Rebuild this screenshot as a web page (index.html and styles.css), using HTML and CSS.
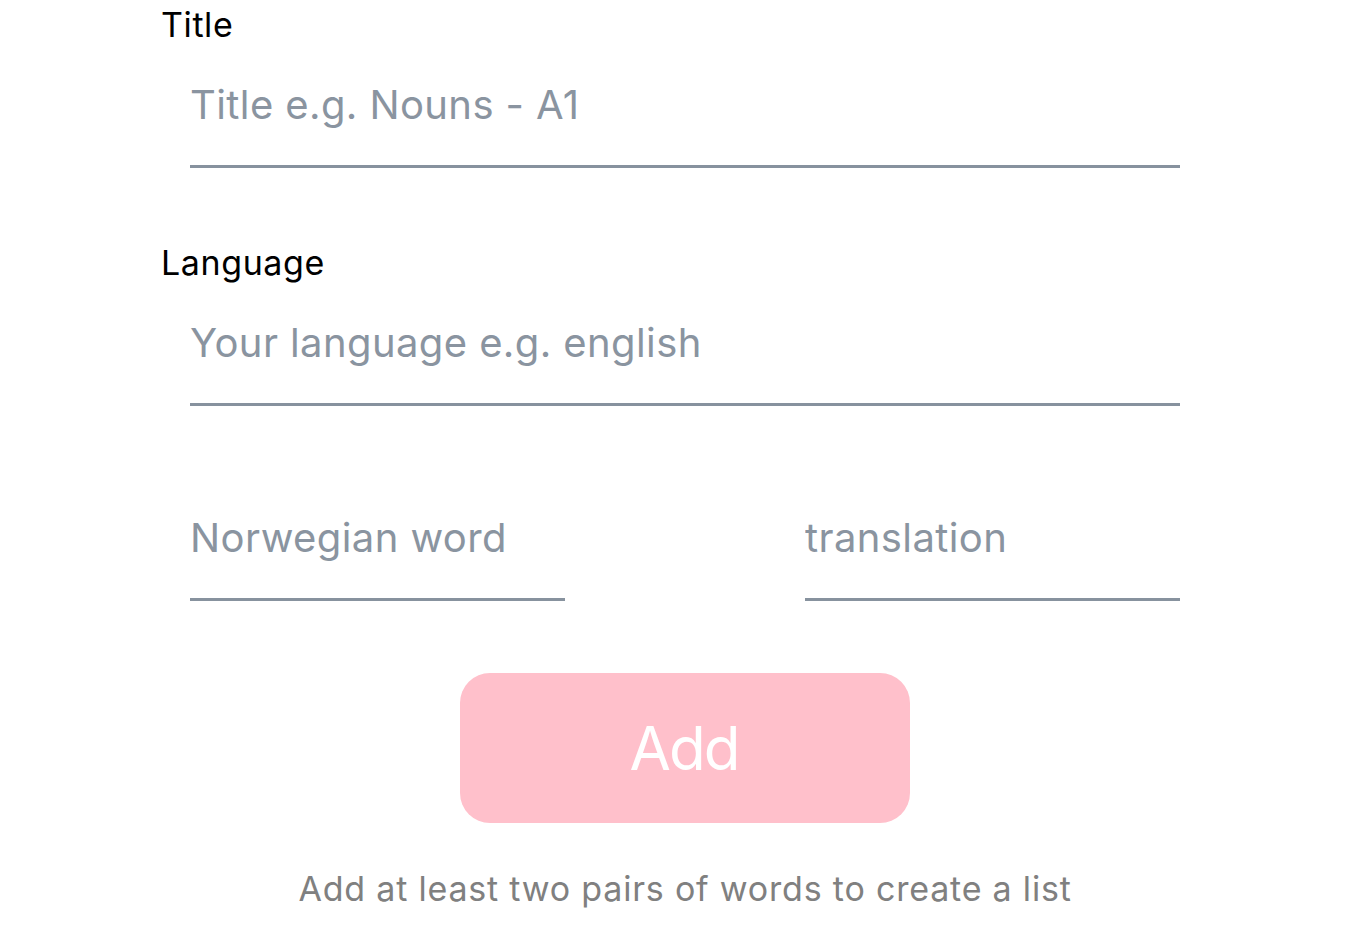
FILE: index.html
```html
<!DOCTYPE html>
<html lang="en">
<head>
<meta charset="utf-8">
<title>New list</title>
<link rel="stylesheet" href="styles.css">
</head>
<body>
<form class="form">
  <label class="label" for="title">Title</label>
  <input class="field" id="title" type="text" placeholder="Title e.g. Nouns - A1">
  <label class="label label-second" for="lang">Language</label>
  <input class="field" id="lang" type="text" placeholder="Your language e.g. english">
  <div class="pair">
    <input class="field pair-field" type="text" placeholder="Norwegian word">
    <input class="field pair-field" type="text" placeholder="translation">
  </div>
  <div class="actions">
    <button class="add" type="button">Add</button>
  </div>
  <p class="hint">Add at least two pairs of words to create a list</p>
</form>
</body>
</html>
```
FILE: styles.css
```css
html, body {
  margin: 0;
  padding: 0;
  background: #ffffff;
}

.form {
  display: flex;
  flex-direction: column;
  padding: 0 161px;
  margin: 0;
}

.label {
  display: block;
  font-family: Inter, "Noto Sans", sans-serif;
  font-size: 34px;
  line-height: 40px;
  letter-spacing: 0.6px;
  color: #000000;
  margin-top: 5px;
}

.label-second {
  margin-top: 75px;
}

.field {
  display: block;
  box-sizing: content-box;
  margin: 30px 29px 0;
  padding: 0 0 30px;
  height: 60px;
  border: none;
  border-bottom: 3px solid #87929e;
  outline: none;
  background: transparent;
  font-family: Inter, "Noto Sans", sans-serif;
  font-size: 40px;
  line-height: 60px;
  letter-spacing: 0.4px;
  color: #1f2937;
}

.field::placeholder {
  color: #8a94a0;
  opacity: 1;
}

.pair {
  display: flex;
  justify-content: space-between;
  margin: 102px 29px 0;
}

.pair .pair-field {
  margin: 0;
  width: 375px;
}

.actions {
  display: flex;
  justify-content: center;
  margin-top: 72px;
}

.add {
  width: 450px;
  height: 150px;
  border: none;
  border-radius: 30px;
  background: #ffc0cb;
  color: #ffffff;
  font-family: Inter, "Noto Sans", sans-serif;
  font-size: 60px;
  letter-spacing: -2px;
  text-indent: -2px;
  padding: 0;
  cursor: pointer;
}

.hint {
  margin: 46px 0 0;
  text-align: center;
  font-family: Inter, "Noto Sans", sans-serif;
  font-size: 34px;
  line-height: 40px;
  letter-spacing: 0.8px;
  color: #808080;
}
```
